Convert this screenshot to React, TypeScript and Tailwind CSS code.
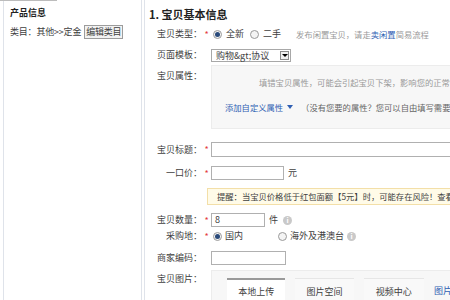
import React from 'react';

const Star = () => <span className="w-[9px] text-center text-[#e4393c] text-[9px] leading-none">*</span>;

const Radio = ({ checked }: { checked?: boolean }) => (
  <span className="inline-flex items-center justify-center w-[9px] h-[9px] rounded-full border border-[#9a9a9a] bg-[#f4f4f4]">
    {checked && <span className="w-[5px] h-[5px] rounded-full bg-[#2a4a7a]" />}
  </span>
);

const Info = () => (
  <span className="inline-flex items-center justify-center w-[9px] h-[9px] rounded-full bg-[#c9c9c9] text-white text-[7px] leading-none font-bold">i</span>
);

const Label = ({ text, req }: { text: string; req?: boolean }) => (
  <div className="flex items-center shrink-0">
    <span className="w-[53px] text-right whitespace-nowrap">{text}：</span>
    {req ? <Star /> : <span className="w-[9px]" />}
  </div>
);

export default function App() {
  return (
    <div
      className="w-[450px] h-[300px] overflow-hidden bg-white flex text-[9px] text-[#404040] relative"
      style={{ fontFamily: '"Noto Sans CJK SC", "Noto Sans", sans-serif' }}
    >
      <div className="absolute top-0 left-0 w-[57px] h-px bg-[#bcbcbc]" />
      {/* left panel */}
      <div className="ml-[3px] w-[139px] shrink-0 h-full border-x border-[#dfe3ea] px-[6px] pt-[6px]">
        <div className="font-bold text-[#222] h-[14px] leading-[14px]">产品信息</div>
        <div className="flex items-center mt-[5px] gap-[3px] tracking-[-0.2px]">
          <span>类目：其他&gt;&gt;定金</span>
          <span className="border border-[#9c9c9c] bg-[#f2f2f2] px-[1px] leading-[12px]">编辑类目</span>
        </div>
      </div>

      {/* main panel */}
      <div className="ml-[2px] flex-1 h-full border-l border-[#dfe3ea] pl-[4px] flex flex-col min-w-0 [&>*]:shrink-0">
        <div className="mt-[7px] h-[14px] leading-[14px] text-[11px] font-bold text-[#222]">1. 宝贝基本信息</div>

        <div className="flex items-center h-[20px] mt-[3px]">
          <Label text="宝贝类型" req />
          <div className="flex items-center ml-[2px] gap-[4px]">
            <Radio checked /><span>全新</span>
          </div>
          <div className="flex items-center ml-[6px] gap-[4px]">
            <Radio /><span>二手</span>
          </div>
          <span className="ml-[15px] text-[#9a9a9a] text-[8.3px] whitespace-nowrap">
            发布闲置宝贝，请走<span className="text-[#2f5fb3]">卖闲置</span>简易流程
          </span>
        </div>

        <div className="flex items-center h-[20px] mt-[1px]">
          <Label text="页面模板" />
          <div className="w-[80px] h-[13px] border border-[#a8a8a8] flex items-center justify-between pl-[4px] pr-[1px]">
            <span className="leading-none">购物&amp;gt;协议</span>
            <span className="w-[9px] h-[9px] border border-[#8c8c8c] bg-[#f0f0f0] flex items-center justify-center">
              <span className="w-0 h-0 border-x-[3px] border-x-transparent border-t-[3px] border-t-black" />
            </span>
          </div>
        </div>

        <div className="flex">
          <div className="pt-[4px]"><Label text="宝贝属性" /></div>
          <div className="flex-1 h-[64px] min-w-[260px] bg-[#f7f7f7] border border-[#ececec] relative whitespace-nowrap">
            <div className="absolute left-[47px] top-[10px] text-[#9a9a9a] text-[8.3px]">
              填错宝贝属性，可能会引起宝贝下架，影响您的正常销售
            </div>
            <div className="absolute left-[13px] top-[35px] flex items-center text-[8.3px]">
              <span className="text-[#2f5fb3]">添加自定义属性</span>
              <span className="ml-[4px] w-0 h-0 border-x-[3px] border-x-transparent border-t-[4px] border-t-[#2f5fb3]" />
              <span className="ml-[8px] text-[#666]">（没有您要的属性？您可以自由填写需要的属性）</span>
            </div>
          </div>
        </div>

        <div className="flex items-center h-[15px] mt-[13px]">
          <Label text="宝贝标题" req />
          <div className="flex-1 h-[15px] border border-[#b0b0b0] min-w-[260px]" />
        </div>

        <div className="flex items-center h-[14px] mt-[9px]">
          <Label text="一口价" req />
          <div className="w-[73px] h-[14px] border border-[#b0b0b0]" />
          <span className="ml-[4px]">元</span>
        </div>

        <div className="ml-[58px] mt-[8px] h-[17px] min-w-[260px] bg-[#fffbe8] border border-[#f3dfa8] flex items-center pl-[9px] whitespace-nowrap text-[8.3px]">
          提醒：当宝贝价格低于红包面额【5元】时，可能存在风险！查看详情
        </div>

        <div className="flex items-center h-[14px] mt-[8px]">
          <Label text="宝贝数量" req />
          <div className="w-[54px] h-[14px] border border-[#b0b0b0] flex items-center pl-[3px]">8</div>
          <span className="ml-[4px]">件</span>
          <span className="ml-[5px] flex"><Info /></span>
        </div>

        <div className="flex items-center h-[12px] mt-[3px]">
          <Label text="采购地" req />
          <div className="flex items-center gap-[3px] ml-[2px]">
            <Radio checked /><span>国内</span>
          </div>
          <div className="flex items-center gap-[3px] ml-[35px]">
            <Radio /><span>海外及港澳台</span>
            <Info />
          </div>
        </div>

        <div className="flex items-center h-[14px] mt-[9px]">
          <Label text="商家编码" />
          <div className="w-[75px] h-[14px] border border-[#b0b0b0]" />
        </div>

        <div className="flex mt-[5px]">
          <div className="pt-[2px]"><Label text="宝贝图片" /></div>
          <div className="flex-1 h-[40px] min-w-[260px] bg-[#f7f7f7] border border-[#ececec] pt-[7px] pl-[15px] flex gap-[10px] whitespace-nowrap">
            <div className="w-[61px] h-[30px] bg-white border-t-2 border-[#9a9a9a] flex justify-center pt-[5px]">本地上传</div>
            <div className="w-[61px] h-[30px] bg-[#f9f9f9] border-t border-[#e6e6e6] flex justify-center pt-[6px]">图片空间</div>
            <div className="w-[63px] h-[30px] bg-[#f9f9f9] border-t border-[#e6e6e6] flex justify-center pt-[6px]">视频中心</div>
            <div className="text-[#2f5fb3] pt-[6px]">图片搬家</div>
          </div>
        </div>
      </div>
    </div>
  );
}
